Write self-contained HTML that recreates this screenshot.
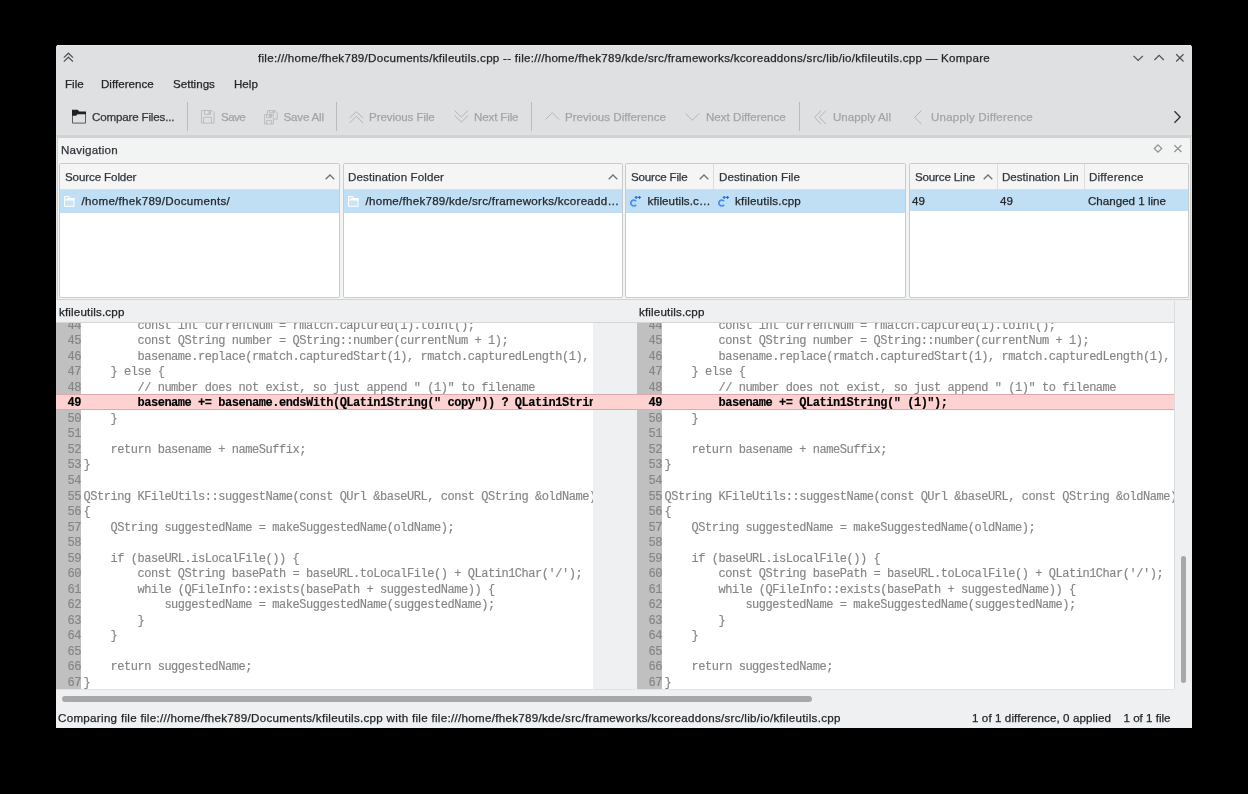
<!DOCTYPE html>
<html><head><meta charset="utf-8">
<style>
*{box-sizing:border-box;margin:0;padding:0}
html,body{width:1248px;height:794px;background:#000;overflow:hidden}
body{position:relative;font-family:"Liberation Sans",sans-serif;color:#232629;-webkit-text-stroke:0.25px currentColor}
.a{position:absolute}
.win{left:56px;top:45px;width:1136px;height:683px;background:#eff0f1;border-radius:3px 3px 0 0;overflow:hidden}
.tb{left:56px;top:45px;width:1136px;height:90px;background:#dee0e2;border-radius:3px 3px 0 0}
.title{left:56px;top:51px;width:1136px;text-align:center;font-size:11.6px;line-height:14px;color:#232629;white-space:nowrap;letter-spacing:0.27px}
.menu{top:77px;font-size:11.6px;line-height:14px;color:#232629;white-space:nowrap}
.tbt{top:110px;font-size:11.6px;line-height:14px;white-space:nowrap}
.en{color:#31363b}
.dis{color:#a3a5a7}
.sep{top:102px;width:1px;height:29px;background:#b9bbbd}
.tbline{left:56px;top:135px;width:1136px;height:3px;background:#d0d1d3}
.dock{left:57px;top:138px;width:1134px;height:162px;background:#f2f3f3;border:1px solid #d0d1d2;border-top:0}
.dockl{left:56px;top:137px;width:1px;height:163px;background:#e4e5e6}
.dockr{left:1191px;top:137px;width:1px;height:163px;background:#e4e5e6}
.nav{left:61px;letter-spacing:0.2px;top:143px;font-size:11.6px;line-height:14px;color:#31363b}
.lv{top:163px;height:135px;background:#fff;border:1px solid #c9cacb;border-radius:2px;overflow:hidden}
.hdr{left:0;top:0;height:26px;width:100%;background:#f5f5f5;border-bottom:1px solid #dcdddd}
.hc{top:6px;font-size:11.6px;line-height:14px;color:#31363b;white-space:nowrap}
.hsep{top:0;width:1px;height:26px;background:#dcdddd}
.sel{left:0;top:26px;height:22.6px;width:100%;background:#c1dff4}
.st{top:30px;font-size:11.6px;line-height:14px;color:#232629;white-space:nowrap}
.fh{top:305px;font-size:11.6px;line-height:14px;color:#232629}
.diff{top:322.5px;height:366.5px;background:#fff;overflow:hidden}
.gut{top:0;height:100%;background:#c0c0c0}
.lines{left:0;top:-6.20px;width:100%}
.ln{position:relative;height:15.54px;white-space:pre;font-family:"Liberation Mono",monospace;font-size:12.0px;letter-spacing:-0.461px;line-height:15.54px;color:#858585;-webkit-text-stroke:0.15px currentColor}
.ln .g{position:absolute;left:0;width:25px;text-align:right;padding-top:2.4px;top:0}
.ln .t{position:absolute;left:27.5px;top:0;padding-top:2.4px}
.ln.chg{background:#ffd2d2;color:#000;font-weight:bold;box-shadow:inset 0 1px 0 #dcaaaa, inset 0 -1px 0 #dcaaaa}
.cw{left:593px;top:322.5px;width:44px;height:366.5px;background:#eff0f1}
.vsb{left:1174px;top:301px;width:18px;height:388px;background:#eff0f1;border-left:1px solid #dcdddf}
.vsbh{left:1180.5px;top:556.4px;width:5.5px;height:127px;background:#a7a8aa;border-radius:3px}
.hsb{left:56px;top:689px;width:1118px;height:16px;background:#eff0f1;border-top:1px solid #e2e3e4}
.hsbh{left:62px;top:696.2px;width:750px;height:5.4px;background:#a7a8aa;border-radius:3px}
.status{top:711px;font-size:11.6px;line-height:14px;color:#232629;white-space:nowrap}
svg{position:absolute;overflow:visible}
</style></head><body>
<div id="root" style="position:absolute;left:0;top:0;width:1248px;height:794px;will-change:transform">
<div class="a win"></div>
<div class="a tb"></div>
<div class="a" style="left:57px;top:45px;width:1134px;height:1px;background:#e8e9ea"></div>
<!-- title bar icons -->
<svg style="left:0;top:0" width="1248" height="80" viewBox="0 0 1248 80"><g fill="none" stroke="#505255" stroke-width="1.25">
<path d="M63.8 57.6 L68.4 53.2 L73 57.6 M63.8 61.6 L68.4 57.2 L73 61.6"/>
<path d="M1133.5 55.9 L1138.2 60.5 L1142.9 55.9"/>
<path d="M1154.4 60 L1159.1 55.3 L1163.8 60"/>
<path d="M1176.2 54.3 L1183.5 61.5 M1183.5 54.3 L1176.2 61.5"/>
</g></svg>
<div class="a title">file:///home/fhek789/Documents/kfileutils.cpp -- file:///home/fhek789/kde/src/frameworks/kcoreaddons/src/lib/io/kfileutils.cpp — Kompare</div>
<!-- menu -->
<div class="a menu" style="left:65px">File</div>
<div class="a menu" style="left:101px">Difference</div>
<div class="a menu" style="left:173px">Settings</div>
<div class="a menu" style="left:234px">Help</div>
<!-- toolbar -->
<svg style="left:0;top:0" width="100" height="130" viewBox="0 0 100 130"><path d="M72.5 111 V123.1 H85.5 V112" fill="none" stroke="#5a5d60" stroke-width="1"/><path d="M72 109.7 H77.6 L79.3 111.5 H86 V114.3 H77.6 L76 115.8 H72 Z" fill="#1f2225"/></svg>
<div class="a tbt en" style="left:92px;letter-spacing:-0.17px">Compare Files...</div>
<div class="a sep" style="left:187px"></div>
<svg style="left:0;top:0" width="230" height="130" viewBox="0 0 230 130"><g fill="none" stroke="#bcbdbf" stroke-width="1"><path d="M201.5 110.5 H211.8 L214.1 112.8 V123.1 H201.5 Z M204.5 110.5 V114.3 H210.5 V110.5 M203.5 123.1 V117.3 H211.5 V123.1"/></g><rect x="208.5" y="111" width="2" height="3" fill="#bcbdbf"/></svg>
<div class="a tbt dis" style="left:221px;letter-spacing:-0.6px">Save</div>
<svg style="left:0;top:0" width="290" height="130" viewBox="0 0 290 130"><g fill="none" stroke="#bcbdbf" stroke-width="1"><path d="M264.6 114.6 H273.3 V124 H264.6 Z M266.6 114.6 V117.6 H271.4 V114.6 M266.6 124 V120.4 H271.4 V124 M267.5 114 V110.6 H275 L277.2 112.8 V119.2 H274 M269.5 110.6 V112.8 H274.5 V110.6"/></g><rect x="269" y="115" width="2" height="2.5" fill="#bcbdbf"/><rect x="272.5" y="111" width="2" height="1.8" fill="#bcbdbf"/></svg>
<div class="a tbt dis" style="left:283.5px;letter-spacing:-0.2px">Save All</div>
<div class="a sep" style="left:336px"></div>
<svg style="left:349px;top:110.5px" width="15" height="13" viewBox="0 0 15 13"><path d="M0.5 7 L7.3 0.7 L14.1 7 M0.5 12 L7.3 5.2 L14.1 12" fill="none" stroke="#b4b5b7" stroke-width="1"/></svg>
<div class="a tbt dis" style="left:369px;letter-spacing:-0.1px">Previous File</div>
<svg style="left:454px;top:110px" width="15" height="13" viewBox="0 0 15 13"><path d="M0.5 0.5 L7.3 7 L14.1 0.5 M0.5 5.5 L7.3 12 L14.1 5.5" fill="none" stroke="#b4b5b7" stroke-width="1"/></svg>
<div class="a tbt dis" style="left:474px;letter-spacing:-0.15px">Next File</div>
<div class="a sep" style="left:531px"></div>
<svg style="left:544.5px;top:112px" width="15" height="8" viewBox="0 0 15 8"><path d="M0.5 7.5 L7.3 0.7 L14.1 7.5" fill="none" stroke="#b4b5b7" stroke-width="1"/></svg>
<div class="a tbt dis" style="left:565px">Previous Difference</div>
<svg style="left:685px;top:112.5px" width="15" height="8" viewBox="0 0 15 8"><path d="M0.5 0.5 L7.3 7.3 L14.1 0.5" fill="none" stroke="#b4b5b7" stroke-width="1"/></svg>
<div class="a tbt dis" style="left:706px">Next Difference</div>
<div class="a sep" style="left:799px"></div>
<svg style="left:814px;top:110px" width="14" height="15" viewBox="0 0 14 15"><path d="M7 0.5 L0.7 7.3 L7 14.1 M12 0.5 L5.2 7.3 L12 14.1" fill="none" stroke="#b4b5b7" stroke-width="1"/></svg>
<div class="a tbt dis" style="left:833px">Unapply All</div>
<svg style="left:914px;top:110px" width="8" height="15" viewBox="0 0 8 15"><path d="M7.5 0.5 L0.7 7.3 L7.5 14.1" fill="none" stroke="#b4b5b7" stroke-width="1"/></svg>
<div class="a tbt dis" style="left:931px;letter-spacing:0.2px">Unapply Difference</div>
<svg style="left:1174px;top:110.5px" width="8" height="13" viewBox="0 0 8 13"><path d="M0.5 0.3 L6.1 6 L0.5 11.7" fill="none" stroke="#2d3134" stroke-width="1.3"/></svg>
<div class="a tbline"></div>
<!-- dock -->
<div class="a dock"></div>
<div class="a dockl"></div>
<div class="a dockr"></div>
<div class="a nav">Navigation</div>
<svg style="left:0;top:0" width="1248" height="160" viewBox="0 0 1248 160"><g fill="none" stroke="#8c8e90" stroke-width="1.15"><path d="M1158 144.9 L1161.7 148.5 L1158 152.1 L1154.3 148.5 Z"/><path d="M1174.4 145.1 L1181.4 152 M1181.4 145.1 L1174.4 152"/></g></svg>

<div class="a lv" style="left:59px;width:281px">
  <div class="a hdr"></div>
  <div class="a hc" style="left:5px;letter-spacing:-0.12px">Source Folder</div>
  <svg style="left:265px;top:9.6px" width="10" height="6" viewBox="0 0 10 6"><path d="M0.7 5.3 L5 1 L9.3 5.3" fill="none" stroke="#6f7173" stroke-width="1.3"/></svg>
  <div class="a sel"></div>
  <svg style="left:3px;top:31px" width="13" height="13" viewBox="0 0 13 13"><path d="M1.5 5.6 L4.6 3 H11.5 V5.6 Z" fill="#fff" fill-opacity="0.9"/><path d="M1.5 1.6 H6 L7.5 3.5 H11 V11.3 H1.5 Z" fill="#c9e4f6" stroke="#fff" stroke-width="1"/><path d="M1.5 5.6 L4.6 3 H11.5 V5.6 Z" fill="#fdfeff"/></svg>
  <div class="a st" style="left:21.5px;letter-spacing:0.28px">/home/fhek789/Documents/</div>
</div>
<div class="a lv" style="left:343px;width:280px">
  <div class="a hdr"></div>
  <div class="a hc" style="left:4px;letter-spacing:0.11px">Destination Folder</div>
  <svg style="left:264px;top:9.6px" width="10" height="6" viewBox="0 0 10 6"><path d="M0.7 5.3 L5 1 L9.3 5.3" fill="none" stroke="#6f7173" stroke-width="1.3"/></svg>
  <div class="a sel"></div>
  <svg style="left:3px;top:31px" width="13" height="13" viewBox="0 0 13 13"><path d="M1.5 5.6 L4.6 3 H11.5 V5.6 Z" fill="#fff" fill-opacity="0.9"/><path d="M1.5 1.6 H6 L7.5 3.5 H11 V11.3 H1.5 Z" fill="#c9e4f6" stroke="#fff" stroke-width="1"/><path d="M1.5 5.6 L4.6 3 H11.5 V5.6 Z" fill="#fdfeff"/></svg>
  <div class="a st" style="left:21.5px;letter-spacing:0.26px">/home/fhek789/kde/src/frameworks/kcoreadd…</div>
</div>
<div class="a lv" style="left:625px;width:281px">
  <div class="a hdr"></div>
  <div class="a hc" style="left:5px;letter-spacing:-0.2px">Source File</div>
  <svg style="left:73px;top:9.6px" width="10" height="6" viewBox="0 0 10 6"><path d="M0.7 5.3 L5 1 L9.3 5.3" fill="none" stroke="#6f7173" stroke-width="1.3"/></svg>
  <div class="a hsep" style="left:87px"></div>
  <div class="a hc" style="left:93px;letter-spacing:0.07px">Destination File</div>
  <div class="a sel"></div>
  <svg style="left:1px;top:29px" width="18" height="18" viewBox="0 0 18 18"><path d="M9.06 8.1 A2.95 2.95 0 1 0 9.06 11.9" fill="none" stroke="#4a90ee" stroke-width="1.8"/><path d="M7.7 4.4 H10.7 M11 4.4 H14 M9.2 2.9 V5.9 M12.5 2.9 V5.9" fill="none" stroke="#1d6fe8" stroke-width="1.1"/></svg>
  <div class="a st" style="left:21.5px;letter-spacing:0.1px">kfileutils.c…</div>
  <svg style="left:88.5px;top:29px" width="18" height="18" viewBox="0 0 18 18"><path d="M9.06 8.1 A2.95 2.95 0 1 0 9.06 11.9" fill="none" stroke="#4a90ee" stroke-width="1.8"/><path d="M7.7 4.4 H10.7 M11 4.4 H14 M9.2 2.9 V5.9 M12.5 2.9 V5.9" fill="none" stroke="#1d6fe8" stroke-width="1.1"/></svg>
  <div class="a st" style="left:109px;letter-spacing:0.2px">kfileutils.cpp</div>
</div>
<div class="a lv" style="left:909px;width:280px">
  <div class="a hdr"></div>
  <div class="a hc" style="left:5px;letter-spacing:-0.17px">Source Line</div>
  <svg style="left:73px;top:9.6px" width="10" height="6" viewBox="0 0 10 6"><path d="M0.7 5.3 L5 1 L9.3 5.3" fill="none" stroke="#6f7173" stroke-width="1.3"/></svg>
  <div class="a hsep" style="left:87px"></div>
  <div class="a hc" style="left:92px;width:76px;overflow:hidden">Destination Line</div>
  <div class="a hsep" style="left:174px"></div>
  <div class="a hc" style="left:179px;letter-spacing:0.2px">Difference</div>
  <div class="a sel" style="height:20.8px"></div>
  <div class="a st" style="left:2px">49</div>
  <div class="a st" style="left:90px">49</div>
  <div class="a st" style="left:178px">Changed 1 line</div>
</div>

<!-- file headers -->
<div class="a fh" style="left:59px;letter-spacing:0.17px">kfileutils.cpp</div>
<div class="a fh" style="left:639px;letter-spacing:0.17px">kfileutils.cpp</div>
<div class="a" style="left:56px;top:322px;width:1118px;height:1px;background:#d4d5d6"></div>

<!-- diff panes -->
<div class="a diff" style="left:56px;width:537px">
  <div class="a gut" style="left:0;width:25px"></div>
  <div class="a lines">
<div class="ln"><span class="g">44</span><span class="t">        const int currentNum = rmatch.captured(1).toInt();</span></div>
<div class="ln"><span class="g">45</span><span class="t">        const QString number = QString::number(currentNum + 1);</span></div>
<div class="ln"><span class="g">46</span><span class="t">        basename.replace(rmatch.capturedStart(1), rmatch.capturedLength(1), number);</span></div>
<div class="ln"><span class="g">47</span><span class="t">    } else {</span></div>
<div class="ln"><span class="g">48</span><span class="t">        // number does not exist, so just append &quot; (1)&quot; to filename</span></div>
<div class="ln chg"><span class="g">49</span><span class="t">        basename += basename.endsWith(QLatin1String(&quot; copy&quot;)) ? QLatin1String(&quot;(1)&quot;) : QLatin1String(&quot; (1)&quot;);</span></div>
<div class="ln"><span class="g">50</span><span class="t">    }</span></div>
<div class="ln"><span class="g">51</span><span class="t">&nbsp;</span></div>
<div class="ln"><span class="g">52</span><span class="t">    return basename + nameSuffix;</span></div>
<div class="ln"><span class="g">53</span><span class="t">}</span></div>
<div class="ln"><span class="g">54</span><span class="t">&nbsp;</span></div>
<div class="ln"><span class="g">55</span><span class="t">QString KFileUtils::suggestName(const QUrl &amp;baseURL, const QString &amp;oldName)</span></div>
<div class="ln"><span class="g">56</span><span class="t">{</span></div>
<div class="ln"><span class="g">57</span><span class="t">    QString suggestedName = makeSuggestedName(oldName);</span></div>
<div class="ln"><span class="g">58</span><span class="t">&nbsp;</span></div>
<div class="ln"><span class="g">59</span><span class="t">    if (baseURL.isLocalFile()) {</span></div>
<div class="ln"><span class="g">60</span><span class="t">        const QString basePath = baseURL.toLocalFile() + QLatin1Char(&#x27;/&#x27;);</span></div>
<div class="ln"><span class="g">61</span><span class="t">        while (QFileInfo::exists(basePath + suggestedName)) {</span></div>
<div class="ln"><span class="g">62</span><span class="t">            suggestedName = makeSuggestedName(suggestedName);</span></div>
<div class="ln"><span class="g">63</span><span class="t">        }</span></div>
<div class="ln"><span class="g">64</span><span class="t">    }</span></div>
<div class="ln"><span class="g">65</span><span class="t">&nbsp;</span></div>
<div class="ln"><span class="g">66</span><span class="t">    return suggestedName;</span></div>
<div class="ln"><span class="g">67</span><span class="t">}</span></div>
  </div>
</div>
<div class="a cw"></div>
<div class="a" style="left:593px;top:394px;width:44px;height:16px;background:#ffd2d2;border-top:1px solid #d9a9a9;border-bottom:1px solid #d9a9a9"></div>
<div class="a diff" style="left:637px;width:537px">
  <div class="a gut" style="left:0;width:25px"></div>
  <div class="a lines">
<div class="ln"><span class="g">44</span><span class="t">        const int currentNum = rmatch.captured(1).toInt();</span></div>
<div class="ln"><span class="g">45</span><span class="t">        const QString number = QString::number(currentNum + 1);</span></div>
<div class="ln"><span class="g">46</span><span class="t">        basename.replace(rmatch.capturedStart(1), rmatch.capturedLength(1), number);</span></div>
<div class="ln"><span class="g">47</span><span class="t">    } else {</span></div>
<div class="ln"><span class="g">48</span><span class="t">        // number does not exist, so just append &quot; (1)&quot; to filename</span></div>
<div class="ln chg"><span class="g">49</span><span class="t">        basename += QLatin1String(&quot; (1)&quot;);</span></div>
<div class="ln"><span class="g">50</span><span class="t">    }</span></div>
<div class="ln"><span class="g">51</span><span class="t">&nbsp;</span></div>
<div class="ln"><span class="g">52</span><span class="t">    return basename + nameSuffix;</span></div>
<div class="ln"><span class="g">53</span><span class="t">}</span></div>
<div class="ln"><span class="g">54</span><span class="t">&nbsp;</span></div>
<div class="ln"><span class="g">55</span><span class="t">QString KFileUtils::suggestName(const QUrl &amp;baseURL, const QString &amp;oldName)</span></div>
<div class="ln"><span class="g">56</span><span class="t">{</span></div>
<div class="ln"><span class="g">57</span><span class="t">    QString suggestedName = makeSuggestedName(oldName);</span></div>
<div class="ln"><span class="g">58</span><span class="t">&nbsp;</span></div>
<div class="ln"><span class="g">59</span><span class="t">    if (baseURL.isLocalFile()) {</span></div>
<div class="ln"><span class="g">60</span><span class="t">        const QString basePath = baseURL.toLocalFile() + QLatin1Char(&#x27;/&#x27;);</span></div>
<div class="ln"><span class="g">61</span><span class="t">        while (QFileInfo::exists(basePath + suggestedName)) {</span></div>
<div class="ln"><span class="g">62</span><span class="t">            suggestedName = makeSuggestedName(suggestedName);</span></div>
<div class="ln"><span class="g">63</span><span class="t">        }</span></div>
<div class="ln"><span class="g">64</span><span class="t">    }</span></div>
<div class="ln"><span class="g">65</span><span class="t">&nbsp;</span></div>
<div class="ln"><span class="g">66</span><span class="t">    return suggestedName;</span></div>
<div class="ln"><span class="g">67</span><span class="t">}</span></div>
  </div>
</div>
<div class="a vsb"></div>
<div class="a vsbh"></div>
<div class="a hsb"></div>
<div class="a hsbh"></div>

<!-- status -->
<div class="a status" style="left:58px;letter-spacing:0.295px">Comparing file file:///home/fhek789/Documents/kfileutils.cpp with file file:///home/fhek789/kde/src/frameworks/kcoreaddons/src/lib/io/kfileutils.cpp</div>
<div class="a status" style="left:972px;letter-spacing:0.09px">1 of 1 difference, 0 applied</div>
<div class="a status" style="left:1123.5px">1 of 1 file</div>
</div>
</body></html>
